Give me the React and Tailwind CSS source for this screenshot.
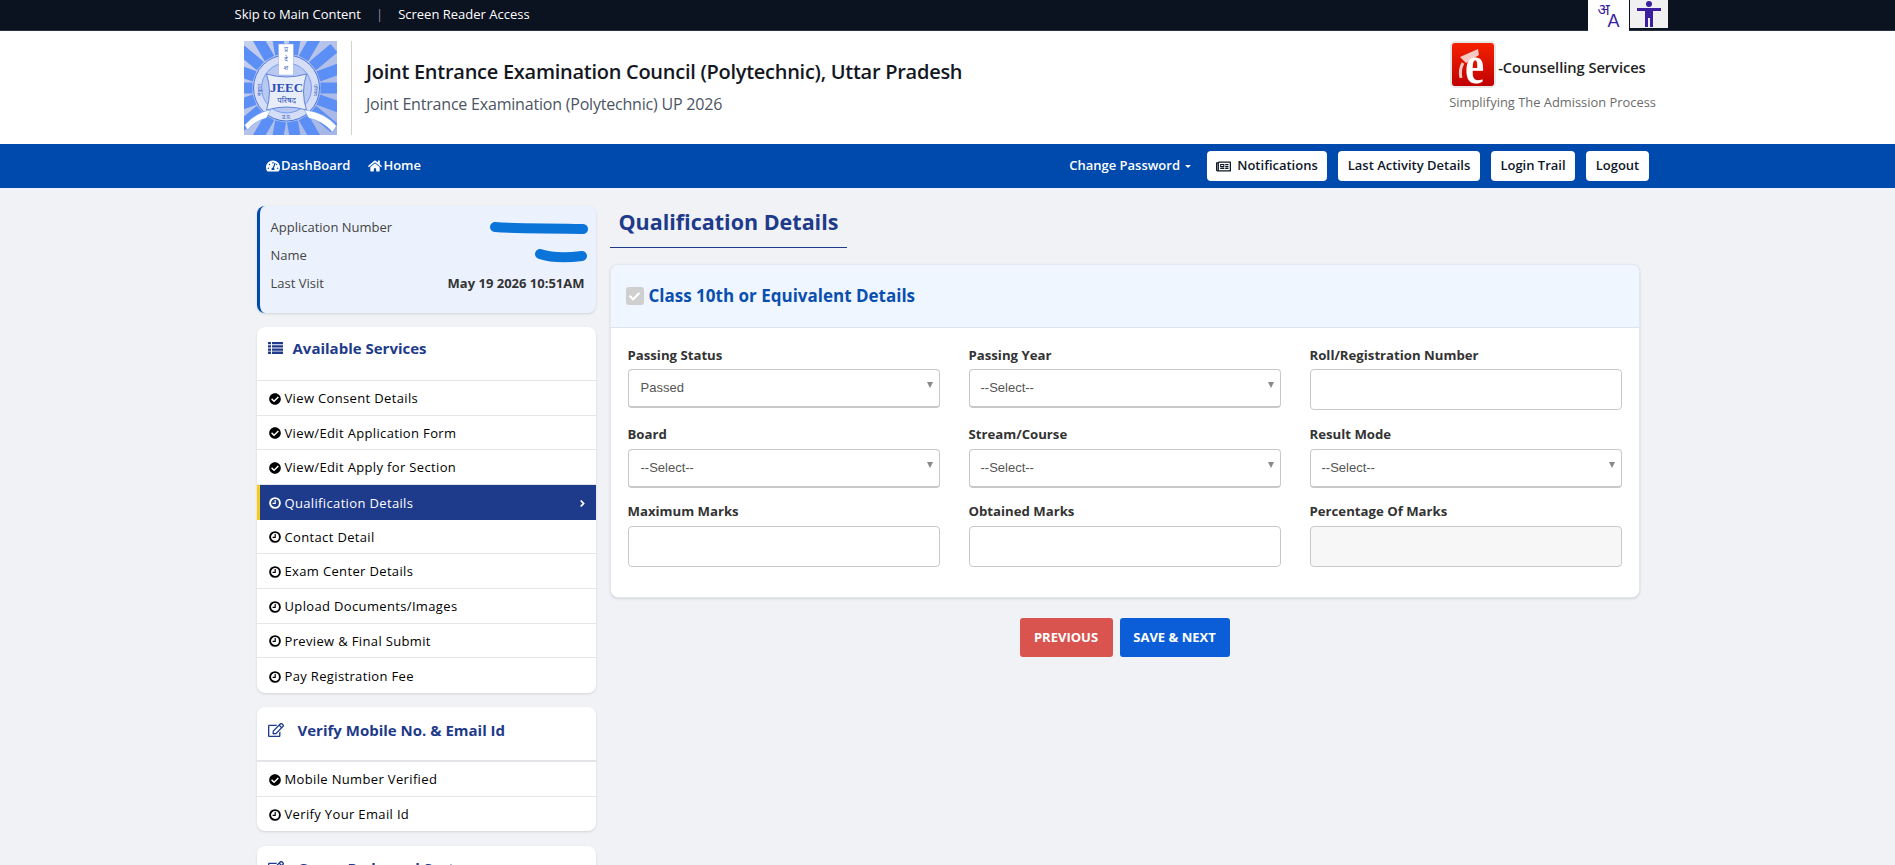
import React from "react";
import {
  FaAngleRight,
  FaCheck,
  FaCheckCircle,
  FaHome,
  FaRegEdit,
  FaRegNewspaper,
  FaTachometerAlt,
} from "react-icons/fa";

const services = [
  ["View Consent Details", true],
  ["View/Edit Application Form", true],
  ["View/Edit Apply for Section", true],
  ["Qualification Details", false, true],
  ["Contact Detail", false],
  ["Exam Center Details", false],
  ["Upload Documents/Images", false],
  ["Preview & Final Submit", false],
  ["Pay Registration Fee", false],
];

const JeecLogo = () => {
  const rays = [];
  for (let i = 0; i < 18; i++) {
    rays.push(
      <rect key={i} x="-5.5" y="-62" width="11" height="28" fill="#5c8ff5" transform={`rotate(${i * 20 + 10})`} />
    );
  }
  return (
    <svg width="93" height="94" viewBox="-46.5 -47 93 94" className="shrink-0">
      <defs>
        <linearGradient id="jb" x1="0" y1="0" x2="1" y2="1">
          <stop offset="0" stopColor="#c6d0ee" />
          <stop offset="1" stopColor="#a4b5e6" />
        </linearGradient>
      </defs>
      <rect x="-46.5" y="-47" width="93" height="94" fill="url(#jb)" />
      <g transform="translate(-4 0)">
        {rays}
        <circle r="33" fill="#d5def6" stroke="#4a78e0" strokeWidth="1" />
        <circle r="25" fill="#b8c8f0" stroke="#5c8ff5" strokeWidth="0.8" />
        <text x="-26" y="2" fontFamily="'Noto Sans', sans-serif" fontSize="5" fill="#3d5fc0" transform="rotate(-90 -26 2)" textAnchor="middle">संयुक्त</text>
        <text x="27" y="2" fontFamily="'Noto Sans', sans-serif" fontSize="5" fill="#3d5fc0" transform="rotate(90 27 2)" textAnchor="middle">परिषद</text>
        <path d="M-20 -14 Q0 -8 20 -14 Q14 4 20 22 Q0 16 -20 22 Q-14 4 -20 -14Z" fill="#e8edfa" stroke="#4a6fd0" strokeWidth="0.8" />
        <rect x="-8" y="-44" width="15" height="31" fill="#fff" stroke="#8aa6e8" strokeWidth="0.5" />
        <text x="-0.5" y="-36" textAnchor="middle" fontFamily="'Noto Sans', sans-serif" fontSize="6.5" fill="#3d5fc0">प्र</text>
        <text x="-0.5" y="-27" textAnchor="middle" fontFamily="'Noto Sans', sans-serif" fontSize="6.5" fill="#3d5fc0">दे</text>
        <text x="-0.5" y="-18" textAnchor="middle" fontFamily="'Noto Sans', sans-serif" fontSize="6.5" fill="#3d5fc0">श</text>
        <text x="0" y="4" textAnchor="middle" fontFamily="'Liberation Serif', serif" fontWeight="700" fontSize="13" fill="#2b4fb8">JEEC</text>
        <text x="0" y="15" textAnchor="middle" fontFamily="'Noto Sans', sans-serif" fontSize="8" fill="#2b4fb8">परिषद</text>
        <text x="0" y="31" textAnchor="middle" fontFamily="'Noto Sans', sans-serif" fontSize="5.5" fill="#3d5fc0">उ.प्र.</text>
        <path d="M-42 37 Q-30 24 -16 22 L-20 30 Q-32 33 -39 42 Z" fill="#fff" stroke="#5c8ff5" strokeWidth="0.5" />
        <path d="M50 38 Q38 24 18 22 L22 30 Q36 33 46 44 Z" fill="#fff" stroke="#5c8ff5" strokeWidth="0.5" />
      </g>
    </svg>
  );
};

const ECounselLogo = () => (
  <div className="w-[46px] h-[47px] rounded-[5px] border-2 border-[#e8e8e8] bg-gradient-to-b from-[#f52000] to-[#c00000] shrink-0 overflow-hidden">
    <svg width="42" height="43" viewBox="0 0 42 43">
      <path d="M8 14 L26 6 L27 12 L14 20Z" fill="#f6c9c2" />
      <path d="M11 20 Q7 27 9 35" fill="none" stroke="#f6c9c2" strokeWidth="3" />
      <text transform="translate(13 40) scale(1.2 1.55)" fontFamily="'Liberation Serif', serif" fontSize="36" fontWeight="700" fill="#fff">e</text>
    </svg>
  </div>
);

const ListIcon = () => (
  <svg width="15" height="12" viewBox="0 0 15 12" fill="currentColor" className="mt-[5px] mr-[10px] shrink-0">
    <path d="M0 0h3v2.3H0zM4 0h11v2.3H4zM0 3.2h3v2.3H0zM4 3.2h11v2.3H4zM0 6.4h3v2.3H0zM4 6.4h11v2.3H4zM0 9.6h3v2.3H0zM4 9.6h11v2.3H4z" />
  </svg>
);

const ClockIcon = () => (
  <svg width="12" height="12" viewBox="0 0 12 12" fill="none" stroke="currentColor" className="mr-[4px] shrink-0">
    <circle cx="6" cy="6" r="4.9" strokeWidth="1.9" />
    <path d="M6.2 3v3.3H3.6" strokeWidth="1.2" />
  </svg>
);

const Scribble = ({ w, h, d, className }) => (
  <svg width={w} height={h} viewBox={`0 0 ${w} ${h}`} className={className}>
    <path d={d} fill="none" stroke="#0a74d8" strokeWidth="10" strokeLinecap="round" />
  </svg>
);

const SelectBox = ({ value = "--Select--", pad = "pl-[11px]" }) => (
  <div className="relative">
    <div className={`h-[39px] rounded-[4px] border border-[#c8c8c8] border-b-2 bg-white text-[#555] text-[13px] leading-[36px] font-['Liberation_Sans',sans-serif] ${pad}`}>
      {value}
    </div>
    <span className="absolute right-[7px] top-[13px] w-0 h-0 border-l-[3px] border-r-[3px] border-t-[6px] border-l-transparent border-r-transparent border-t-[#888]" />
  </div>
);

const TextBox = ({ disabled }) => (
  <div className={`h-[41px] rounded-[4px] border border-[#c8c8c8] ${disabled ? "bg-[#f7f7f7]" : "bg-white"}`} />
);

const Field = ({ label, children, gap = "mb-[5px]" }) => (
  <div>
    <div className={`text-[13.2px] font-bold text-[#333] leading-[18px] ${gap}`}>{label}</div>
    {children}
  </div>
);

const ServiceRow = ({ label, done, active, last }) => (
  <div
    className={`h-[34.67px] pt-[2px] flex items-center text-[13px] tracking-[0.35px] ${
      active
        ? "bg-[#1e3a8a] text-white border-l-[3px] border-[#facc15] pl-[9px]"
        : `text-black pl-3 ${last ? "" : "border-b border-[#e6e6ea]"}`
    }`}
  >
    {done ? <FaCheckCircle size={12} className="mr-[4px] shrink-0" /> : <ClockIcon />}
    <span>{label}</span>
    {active && <FaAngleRight size={11} className="ml-auto mr-2" />}
  </div>
);

export default function App() {
  return (
    <div className="h-screen overflow-hidden bg-[#f0f2f6] font-['Open_Sans',sans-serif]">
      {/* top bar */}
      <div className="h-[31px] bg-[#0b1220] border-b border-[#2a3140] text-white">
        <div className="mx-auto w-[1442px] pl-[8px] flex items-start h-full">
          <div className="flex items-center h-[30px] text-[13px]">
            <span>Skip to Main Content</span>
            <span className="mx-[15px] text-[#8a8f99]">|</span>
            <span>Screen Reader Access</span>
          </div>
          <div className="ml-auto mr-[1px] flex items-start">
            <div className="relative w-[41px] h-[31px] bg-white text-[#3b1fa0] font-['Liberation_Sans',sans-serif]">
              <span className="absolute left-[10px] top-[2px] text-[16px] leading-[14px] font-['Noto_Sans',sans-serif]">अ</span>
              <span className="absolute left-[20px] top-[13px] text-[18px] leading-[17px]">A</span>
            </div>
            <div className="w-[38px] h-[28px] ml-[1px] bg-[#f0f0f0] flex justify-center">
              <svg width="26" height="27" viewBox="0 0 26 27" fill="#3b1fa0">
                <circle cx="13" cy="4" r="3" />
                <path d="M1 8h24v3h-8v16h-3v-9h-2v9H9V11H1z" />
              </svg>
            </div>
          </div>
        </div>
      </div>

      {/* header */}
      <div className="h-[113px] bg-white">
        <div className="mx-auto w-[1407px] h-full flex items-start pt-[10px]">
          <JeecLogo />
          <div className="ml-[14px] h-[94px] border-l border-[#d0d0d0] pl-[14px] pt-[17px]">
            <div className="text-[20px] font-semibold text-[#14171f] leading-[27px] tracking-[-0.27px]">
              Joint Entrance Examination Council (Polytechnic), Uttar Pradesh
            </div>
            <div className="text-[16px] text-[#4b5563] leading-[22px] mt-[8px] tracking-[-0.2px]">
              Joint Entrance Examination (Polytechnic) UP 2026
            </div>
          </div>
          <div className="ml-auto mr-[-5px]">
            <div className="flex items-start pl-[1px]">
              <ECounselLogo />
              <span className="text-[14.7px] font-semibold text-[#222] leading-[20px] mt-[16px] ml-[2px] tracking-[-0.05px]">-Counselling Services</span>
            </div>
            <div className="text-[12.9px] text-[#6b6b6b] leading-[18px] mt-[5px]">Simplifying The Admission Process</div>
          </div>
        </div>
      </div>

      {/* nav */}
      <div className="h-[44px] bg-[#004aad] text-white">
        <div className="mx-auto w-[1403px] pl-[20px] h-full flex items-center text-[13px] font-semibold">
          <FaTachometerAlt size={14} className="mr-[1px]" />
          <span>DashBoard</span>
          <FaHome size={14} className="ml-[18px] mr-[1px]" />
          <span>Home</span>
          <span className="ml-auto">Change Password</span>
          <span className="ml-[5px] mr-[16px] w-0 h-0 border-l-[3px] border-r-[3px] border-t-[3px] border-l-transparent border-r-transparent border-t-white" />
          <div className="flex gap-[11px] text-[#0f172a]">
            <div className="h-[30px] w-[120px] bg-white rounded-[4px] flex items-center justify-center">
              <FaRegNewspaper size={15} className="mr-[6px]" />
              Notifications
            </div>
            <div className="h-[30px] w-[142px] bg-white rounded-[4px] flex items-center justify-center">Last Activity Details</div>
            <div className="h-[30px] w-[84px] bg-white rounded-[4px] flex items-center justify-center">Login Trail</div>
            <div className="h-[30px] w-[63px] bg-white rounded-[4px] flex items-center justify-center">Logout</div>
          </div>
        </div>
      </div>

      {/* body */}
      <div className="mx-auto w-[1382px] flex items-start gap-[15px]">
        {/* sidebar */}
        <div className="w-[339px] shrink-0 pt-[18px]">
          <div className="h-[107px] rounded-[8px] border-l-[3px] border-[#004aad] bg-[#ebf2fe] shadow-sm pl-[11px] pr-[11px] pt-[8px] text-[13px] text-[#444]">
            <div className="h-[28px] flex items-center justify-between">
              <span>Application Number</span>
              <Scribble w={100} h={14} d="M6 6 C30 8 60 7 94 8" className="-mr-[4px]" />
            </div>
            <div className="h-[28px] flex items-center justify-between">
              <span>Name</span>
              <Scribble w={54} h={14} d="M6 5 C18 9 32 9 48 7" className="-mr-[3px]" />
            </div>
            <div className="h-[28px] flex items-center justify-between">
              <span>Last Visit</span>
              <span className="font-bold text-[#333]">May 19 2026 10:51AM</span>
            </div>
          </div>

          <div className="mt-[14px] rounded-[8px] bg-white shadow-sm overflow-hidden">
            <div className="h-[54px] border-b border-[#e3e4e8] flex items-start pt-[10px] pl-[11px] text-[#1e3a8a]">
              <ListIcon />
              <span className="text-[15px] font-bold leading-[22px]">Available Services</span>
            </div>
            {services.map(([label, done, active], i) => (
              <ServiceRow key={label} label={label} done={done} active={active} last={i === services.length - 1} />
            ))}
          </div>

          <div className="mt-[14px] rounded-[8px] bg-white shadow-sm overflow-hidden">
            <div className="h-[55px] border-b-2 border-[#e3e4e8] flex items-start pt-[12px] pl-[11px] text-[#1e3a8a]">
              <FaRegEdit size={16} className="mt-[3px] mr-[14px]" />
              <span className="text-[15px] font-bold leading-[22px]">Verify Mobile No. &amp; Email Id</span>
            </div>
            <ServiceRow label="Mobile Number Verified" done />
            <ServiceRow label="Verify Your Email Id" last />
          </div>

          <div className="mt-[15px] rounded-[8px] bg-white shadow-sm h-[80px] pt-[11px] pl-[11px] flex items-start text-[#1e3a8a]">
            <FaRegEdit size={16} className="mt-[3px] mr-[14px]" />
            <span className="text-[15px] font-bold leading-[22px]">Query Redressal System</span>
          </div>
        </div>

        {/* main */}
        <div className="flex-1 min-w-0">
          <div className="h-[60px] w-[237px] border-b border-[#1e3a8a] pl-[9px] pt-[20px] -ml-px">
            <h1 className="text-[21.5px] font-bold text-[#1e3a8a] leading-[28px]">Qualification Details</h1>
          </div>
          <div className="mt-[16px] -ml-px h-[334px] w-[1030px] rounded-[8px] bg-white border border-[#e3e7ee] shadow-sm overflow-hidden">
            <div className="h-[63px] bg-[#eff6ff] border-b border-[#dbe3ef] flex items-center pl-[15px]">
              <div className="w-[18px] h-[18px] rounded-[3px] bg-[#cfcfcf] flex items-center justify-center text-white">
                <FaCheck size={11} />
              </div>
              <span className="ml-[5px] text-[17px] font-bold text-[#0a4fb0]">Class 10th or Equivalent Details</span>
            </div>
            <div className="grid grid-cols-3 gap-x-[29px] pl-[17px] pr-[17px] pt-[18px]">
              <Field label="Passing Status"><SelectBox value="Passed" pad="pl-[12px]" /></Field>
              <Field label="Passing Year"><SelectBox /></Field>
              <Field label="Roll/Registration Number"><TextBox /></Field>
              <div className="mt-[15px]"><Field label="Board" gap="mb-[6px]"><SelectBox pad="pl-[12px]" /></Field></div>
              <div className="mt-[15px]"><Field label="Stream/Course" gap="mb-[6px]"><SelectBox /></Field></div>
              <div className="mt-[15px]"><Field label="Result Mode" gap="mb-[6px]"><SelectBox /></Field></div>
              <div className="mt-[14px]"><Field label="Maximum Marks" gap="mb-[6px]"><TextBox /></Field></div>
              <div className="mt-[14px]"><Field label="Obtained Marks" gap="mb-[6px]"><TextBox /></Field></div>
              <div className="mt-[14px]"><Field label="Percentage Of Marks" gap="mb-[6px]"><TextBox disabled /></Field></div>
            </div>
          </div>
          <div className="mt-[20px] flex justify-center gap-[7px] w-[1028px] text-[13px] font-bold text-white">
            <div className="w-[93px] h-[39px] rounded-[3px] bg-[#d9534f] flex items-center justify-center">PREVIOUS</div>
            <div className="w-[110px] h-[39px] rounded-[3px] bg-[#0b5ed7] flex items-center justify-center">SAVE &amp; NEXT</div>
          </div>
        </div>
      </div>
    </div>
  );
}
